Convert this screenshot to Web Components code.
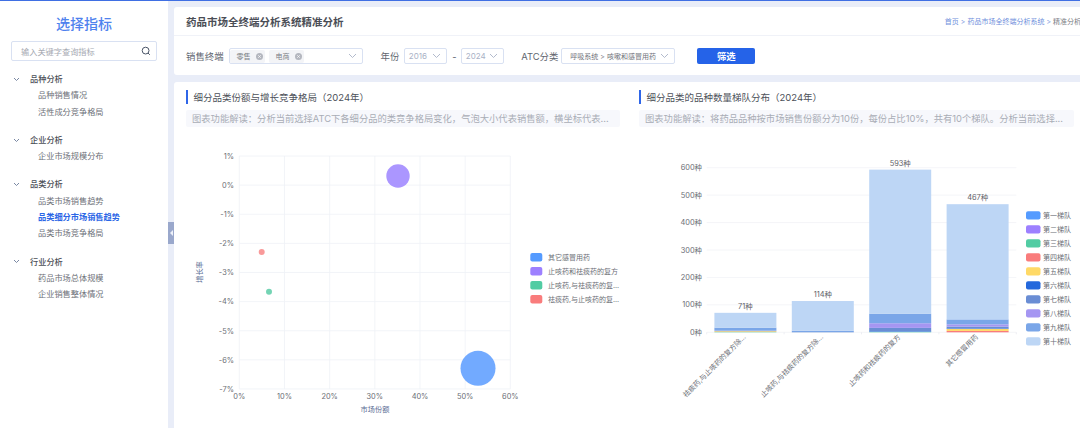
<!DOCTYPE html>
<html lang="zh">
<head>
<meta charset="utf-8">
<title>品类细分市场销售趋势</title>
<style>
	html, body { margin: 0; height: 100%; overflow: hidden; background: #e9edf8; }
	body { font-family: Inter, "Noto Sans CJK SC", sans-serif; }
</style>
</head>
<body>
<app-shell>
	<side-nav slot="side" heading="选择指标" placeholder="输入关键字查询指标">
		<nav-group label="品种分析" items="品种销售情况,活性成分竞争格局"></nav-group>
		<nav-group label="企业分析" items="企业市场规模分布"></nav-group>
		<nav-group label="品类分析" items="品类市场销售趋势,品类细分市场销售趋势,品类市场竞争格局" active="品类细分市场销售趋势"></nav-group>
		<nav-group label="行业分析" items="药品市场总体规模,企业销售整体情况"></nav-group>
	</side-nav>
	<filter-panel slot="head"></filter-panel>
	<chart-card slot="left" heading="细分品类份额与增长竞争格局（2024年）" note="图表功能解读：分析当前选择ATC下各细分品的类竞争格局变化，气泡大小代表销售额，横坐标代表...">
		<bubble-chart></bubble-chart>
	</chart-card>
	<chart-card slot="right" heading="细分品类的品种数量梯队分布（2024年）" note="图表功能解读：将药品品种按市场销售份额分为10份，每份占比10%，共有10个梯队。分析当前选择...">
		<tier-chart></tier-chart>
	</chart-card>
</app-shell>

<script>
const SVG_FONT = `Inter, "Noto Sans CJK SC", sans-serif`;

class AppShell extends HTMLElement {
	constructor() {
		super();
		this.shadow = this.attachShadow({ mode: "open" });
		this.shadow.innerHTML = `
      <style>
        :host { display: block; position: relative; width: 1080px; height: 428px; overflow: hidden; border-top: 1px solid #3f6fe3; box-sizing: border-box; }
        .layout { display: grid; grid-template-columns: 168px 1fr; gap: 6px; height: 100%; }
        .side { background: #fff; }
        .main { display: flex; flex-direction: column; gap: 7px; padding-top: 6px; min-width: 0; }
        .charts { flex: 1; display: grid; grid-template-columns: 434px 435px; column-gap: 19px; padding: 8px 6px 0 12px; background: #fff; border-radius: 3px 0 0 0; }
        .handle { position: absolute; left: 168px; top: 221px; width: 6px; height: 22px; background: #9aa8cc; display: flex; align-items: center; justify-content: center; }
        .handle i { width: 0; height: 0; border: 3px solid transparent; border-right: 3px solid #eef1f9; border-left: 0; }
      </style>
      <div class="layout">
        <div class="side"><slot name="side"></slot></div>
        <div class="main">
          <slot name="head"></slot>
          <div class="charts"><slot name="left"></slot><slot name="right"></slot></div>
        </div>
      </div>
      <div class="handle"><i></i></div>
    `;
	}
}
customElements.define("app-shell", AppShell);

class SideNav extends HTMLElement {
	constructor() {
		super();
		this.shadow = this.attachShadow({ mode: "open" });
		this.shadow.innerHTML = `
      <style>
        :host { display: block; padding: 14px 11px 0 11px; }
        h1 { margin: 0; font-size: 14px; line-height: 18px; font-weight: 500; text-align: center; color: #4f82ee; }
        .search { display: flex; align-items: center; justify-content: space-between; height: 18px; margin-top: 8px; padding: 0 5px 0 9px; border: 1px solid #d9e1f2; border-radius: 2px; font-size: 8.2px; color: #a6a9b2; }
        svg { width: 10px; height: 10px; }
        .groups { display: flex; flex-direction: column; gap: 12px; margin-top: 10px; }
      </style>
      <h1></h1>
      <div class="search"><span class="ph"></span>
        <svg viewBox="0 0 10 10" fill="none" stroke="#4a5568" stroke-width="1"><circle cx="4.6" cy="4.6" r="3.4"/><path d="M7 7l1.8 1.8"/></svg>
      </div>
      <div class="groups"><slot></slot></div>
    `;
		this.shadow.querySelector("h1").textContent = this.getAttribute("heading");
		this.shadow.querySelector(".ph").textContent = this.getAttribute("placeholder");
	}
}
customElements.define("side-nav", SideNav);

class NavGroup extends HTMLElement {
	constructor() {
		super();
		this.shadow = this.attachShadow({ mode: "open" });
		const active = this.getAttribute("active");
		const rows = this.getAttribute("items").split(",").map((t) =>
			`<div class="item${t === active ? " on" : ""}">${t}</div>`).join("");
		this.shadow.innerHTML = `
      <style>
        :host { display: block; font-size: 8.2px; line-height: 16.3px; color: #6d7078; }
        .label { display: flex; align-items: center; gap: 10px; padding-left: 2px; color: #4c4f57; font-weight: 500; }
        svg { width: 7px; height: 5px; }
        .item { padding-left: 27px; }
        .on { color: #2b66e6; font-weight: 700; }
      </style>
      <div class="label">
        <svg viewBox="0 0 7 5" fill="none" stroke="#6b7b98" stroke-width="0.9"><path d="M1 1l2.5 2.5L6 1"/></svg>
        <span>${this.getAttribute("label")}</span>
      </div>
      ${rows}
    `;
	}
}
customElements.define("nav-group", NavGroup);

class SelectBox extends HTMLElement {
	constructor() {
		super();
		this.shadow = this.attachShadow({ mode: "open" });
		this.shadow.innerHTML = `
      <style>
        :host { display: flex; align-items: center; justify-content: space-between; box-sizing: border-box; height: 15.5px; padding: 0 5px 0 4px; border: 1px solid #d9e1f2; border-radius: 2px; font-size: 8px; color: #a9b2c6; white-space: nowrap; }
        svg { width: 9px; height: 6px; flex: none; }
        .tags { display: flex; gap: 4px; }
      </style>
      <div class="tags"><slot></slot></div>
      <svg viewBox="0 0 9 6" fill="none" stroke="#a9b2c6" stroke-width="0.9"><path d="M1 1l3.5 3.5L8 1"/></svg>
    `;
	}
}
customElements.define("select-box", SelectBox);

class TagChip extends HTMLElement {
	constructor() {
		super();
		this.shadow = this.attachShadow({ mode: "open" });
		this.shadow.innerHTML = `
      <style>
        :host { display: flex; align-items: center; gap: 5px; height: 13px; padding: 0 2px 0 7px; background: #f3f4f7; border-radius: 2px; font-size: 7px; color: #7a7d85; }
        svg { width: 7px; height: 7px; }
      </style>
      <slot></slot>
      <svg viewBox="0 0 8 8"><circle cx="4" cy="4" r="4" fill="#b4b7bf"/><path d="M2.5 2.5l3 3M5.5 2.5l-3 3" stroke="#fff" stroke-width="0.8"/></svg>
    `;
	}
}
customElements.define("tag-chip", TagChip);

class FilterPanel extends HTMLElement {
	constructor() {
		super();
		this.shadow = this.attachShadow({ mode: "open" });
		this.shadow.innerHTML = `
      <style>
        :host { display: block; height: 68px; background: #fff; border-radius: 3px 0 0 3px; }
        .top { display: flex; align-items: center; justify-content: space-between; height: 28px; padding: 0 0 0 12px; border-bottom: 1px solid #f0f2f8; }
        h2 { margin: 0; font-size: 10.5px; font-weight: 700; color: #4a4d55; }
        .crumbs { font-size: 7px; color: #6f8fdc; white-space: nowrap; margin-right: -1px; }
        .crumbs b { font-weight: 400; color: #7b7e86; }
        .row { display: flex; align-items: center; height: 38px; padding: 2px 0 0 12px; box-sizing: border-box; font-size: 9.4px; color: #61666f; }
        .lab { margin-right: 5px; }
        .terminal { width: 134px; margin-right: 18px; padding-left: 0; }
        .year { width: 43.5px; margin-left: -0.5px; }
        .dash { width: 14px; text-align: center; }
        .atc { width: 114px; margin-right: 22px; font-size: 7px; color: #6f727a; padding-left: 8px; }
        button { width: 58px; height: 16px; padding: 0; border: 0; border-radius: 2px; background: #2563e8; color: #fff; font: 700 9.4px Inter, "Noto Sans CJK SC", sans-serif; }
      </style>
      <div class="top">
        <h2>药品市场全终端分析系统精准分析</h2>
        <div class="crumbs">首页 &gt; 药品市场全终端分析系统 &gt; <b>精准分析</b></div>
      </div>
      <div class="row">
        <span class="lab">销售终端</span>
        <select-box class="terminal"><tag-chip>零售</tag-chip><tag-chip>电商</tag-chip></select-box>
        <span class="lab">年份</span>
        <select-box class="year">2016</select-box>
        <span class="dash">-</span>
        <select-box class="year" style="margin-right:17px">2024</select-box>
        <span class="lab" style="margin-right:3px">ATC分类</span>
        <select-box class="atc">呼吸系统 &gt; 咳嗽和感冒用药</select-box>
        <button>筛选</button>
      </div>
    `;
	}
}
customElements.define("filter-panel", FilterPanel);

class ChartCard extends HTMLElement {
	constructor() {
		super();
		this.shadow = this.attachShadow({ mode: "open" });
		this.shadow.innerHTML = `
      <style>
        :host { display: block; min-width: 0; }
        h3 { margin: 0; height: 14px; display: flex; align-items: center; padding-left: 5.5px; border-left: 2.5px solid #2f66e8; font-size: 9.5px; font-weight: 400; color: #4d5159; white-space: nowrap; }
        .note { height: 17px; line-height: 17px; margin-top: 6px; padding: 0 6px; background: #f7f8fc; border-radius: 2px; font-size: 9.3px; color: #a9adb6; white-space: nowrap; }
        .plot { margin-top: 13px; }
      </style>
      <h3></h3>
      <div class="note"></div>
      <div class="plot"><slot></slot></div>
    `;
		this.shadow.querySelector("h3").textContent = this.getAttribute("heading");
		this.shadow.querySelector(".note").textContent = this.getAttribute("note");
	}
}
customElements.define("chart-card", ChartCard);

// coordinates below are local to the chart's svg (origin = left edge of its card column, y = 140)
class BubbleChart extends HTMLElement {
	constructor() {
		super();
		this.shadow = this.attachShadow({ mode: "open" });
		const x0 = 53.3, xStep = 45.17, yTop = 16, yStep = 29.12;
		let g = "";
		for (let i = 0; i <= 6; i++) {
			const x = x0 + i * xStep;
			g += `<line x1="${x}" x2="${x}" y1="${yTop}" y2="${yTop + 8 * yStep}" stroke="#eff1f6" stroke-width="0.8"/>`;
			g += `<text x="${x}" y="${yTop + 8 * yStep + 10}" text-anchor="middle" fill="#6b6e75">${i * 10}%</text>`;
		}
		for (let i = 0; i <= 8; i++) {
			const y = yTop + i * yStep;
			g += `<line x1="${x0}" x2="${x0 + 6 * xStep}" y1="${y}" y2="${y}" stroke="#eff1f6" stroke-width="0.8"/>`;
			g += `<text x="48" y="${y + 2.8}" text-anchor="end" fill="#6b6e75">${1 - i}%</text>`;
		}
		const bubbles = [
			[292, 228.3, 17.5, "#72aaff"],
			[212, 36, 11.7, "#ab96ff"],
			[83, 151.7, 3, "#74d4b4"],
			[75.7, 112, 3, "#f99a9a"],
		];
		for (const [cx, cy, r, fill] of bubbles) {
			g += `<circle cx="${cx}" cy="${cy}" r="${r}" fill="${fill}"/>`;
		}
		const legend = [
			["其它感冒用药", "#559bff"],
			["止咳药和祛痰药的复方", "#9d80ff"],
			["止咳药,与祛痰药的复...", "#52cca3"],
			["祛痰药,与止咳药的复...", "#f97c7c"],
		];
		legend.forEach(([name, fill], i) => {
			const y = 113 + i * 14;
			g += `<rect x="344.3" y="${y}" width="12" height="8.5" rx="2" fill="${fill}"/>`;
			g += `<text x="362" y="${y + 6.8}" fill="#6b6e75" font-size="7">${name}</text>`;
		});
		this.shadow.innerHTML = `
      <style>
        :host { display: block; }
        svg { display: block; overflow: visible; font-family: ${SVG_FONT}; font-size: 7.4px; }
      </style>
      <svg width="434" height="288" viewBox="0 0 434 288">
        ${g}
        <text x="189" y="272" text-anchor="middle" fill="#5a6d94" font-size="7.2">市场份额</text>
        <text transform="translate(16 132) rotate(-90)" text-anchor="middle" fill="#5a6d94" font-size="7.2">增长率</text>
      </svg>
    `;
	}
}
customElements.define("bubble-chart", BubbleChart);

class TierChart extends HTMLElement {
	constructor() {
		super();
		this.shadow = this.attachShadow({ mode: "open" });
		const colors = ["#559bff", "#9d80ff", "#52cca3", "#f97c7c", "#ffd966", "#2468dc", "#6a8dd4", "#a596f2", "#7aa6e8", "#bdd6f5"];
		const names = ["第一梯队", "第二梯队", "第三梯队", "第四梯队", "第五梯队", "第六梯队", "第七梯队", "第八梯队", "第九梯队", "第十梯队"];
		const cats = [
			{ label: "祛痰药,与止咳药的复方除...", total: 71, tiers: [0, 0, 1, 0, 3, 0, 1, 1, 11, 54] },
			{ label: "止咳药,与祛痰药的复方除...", total: 114, tiers: [0, 0, 0, 0, 0, 0, 1, 0, 5, 108] },
			{ label: "止咳药和祛痰药的复方", total: 593, tiers: [0, 0, 2, 0, 0, 2, 12, 17, 35, 525] },
			{ label: "其它感冒用药", total: 467, tiers: [0, 0, 0, 5, 7, 2, 7, 8, 18, 420] },
		];
		const x0 = 67.7, x1 = 377.3, y0 = 192.3, yTop = 27.7;
		const unit = (y0 - yTop) / 600;
		const band = (x1 - x0) / 4;
		let g = "";
		for (let i = 0; i <= 6; i++) {
			const y = y0 - i * 100 * unit;
			g += `<line x1="${x0}" x2="${x1}" y1="${y}" y2="${y}" stroke="#f1f2f6" stroke-width="0.8"/>`;
			g += `<text x="63" y="${y + 2.6}" text-anchor="end" fill="#6b6e75">${i * 100}种</text>`;
		}
		for (let i = 0; i <= 4; i++) {
			const x = x0 + i * band;
			g += `<line x1="${x}" x2="${x}" y1="${y0}" y2="${y0 + 2}" stroke="#e8eaf0" stroke-width="0.8"/>`;
		}
		cats.forEach((c, i) => {
			const x = x0 + i * band + 7.7;
			let y = y0;
			c.tiers.forEach((v, t) => {
				if (!v) return;
				const h = v * unit;
				y -= h;
				g += `<rect x="${x}" y="${y}" width="62" height="${h}" fill="${colors[t]}"/>`;
			});
			g += `<text x="${x + 31}" y="${y - 3.8}" text-anchor="middle" fill="#5f6269">${c.total}种</text>`;
			const lx = x0 + i * band + 39.5;
			g += `<text transform="translate(${lx} 197.5) rotate(-45)" text-anchor="end" fill="#6b6e75" font-size="7">${c.label}</text>`;
		});
		names.forEach((n, i) => {
			const y = 71.3 + i * 14;
			g += `<rect x="387" y="${y}" width="14.5" height="8.2" rx="2" fill="${colors[i]}"/>`;
			g += `<text x="404" y="${y + 6.8}" fill="#6b6e75" font-size="7">${n}</text>`;
		});
		this.shadow.innerHTML = `
      <style>
        :host { display: block; }
        svg { display: block; overflow: visible; font-family: ${SVG_FONT}; font-size: 7.4px; }
      </style>
      <svg width="435" height="288" viewBox="0 0 435 288">${g}</svg>
    `;
	}
}
customElements.define("tier-chart", TierChart);
</script>
</body>
</html>
